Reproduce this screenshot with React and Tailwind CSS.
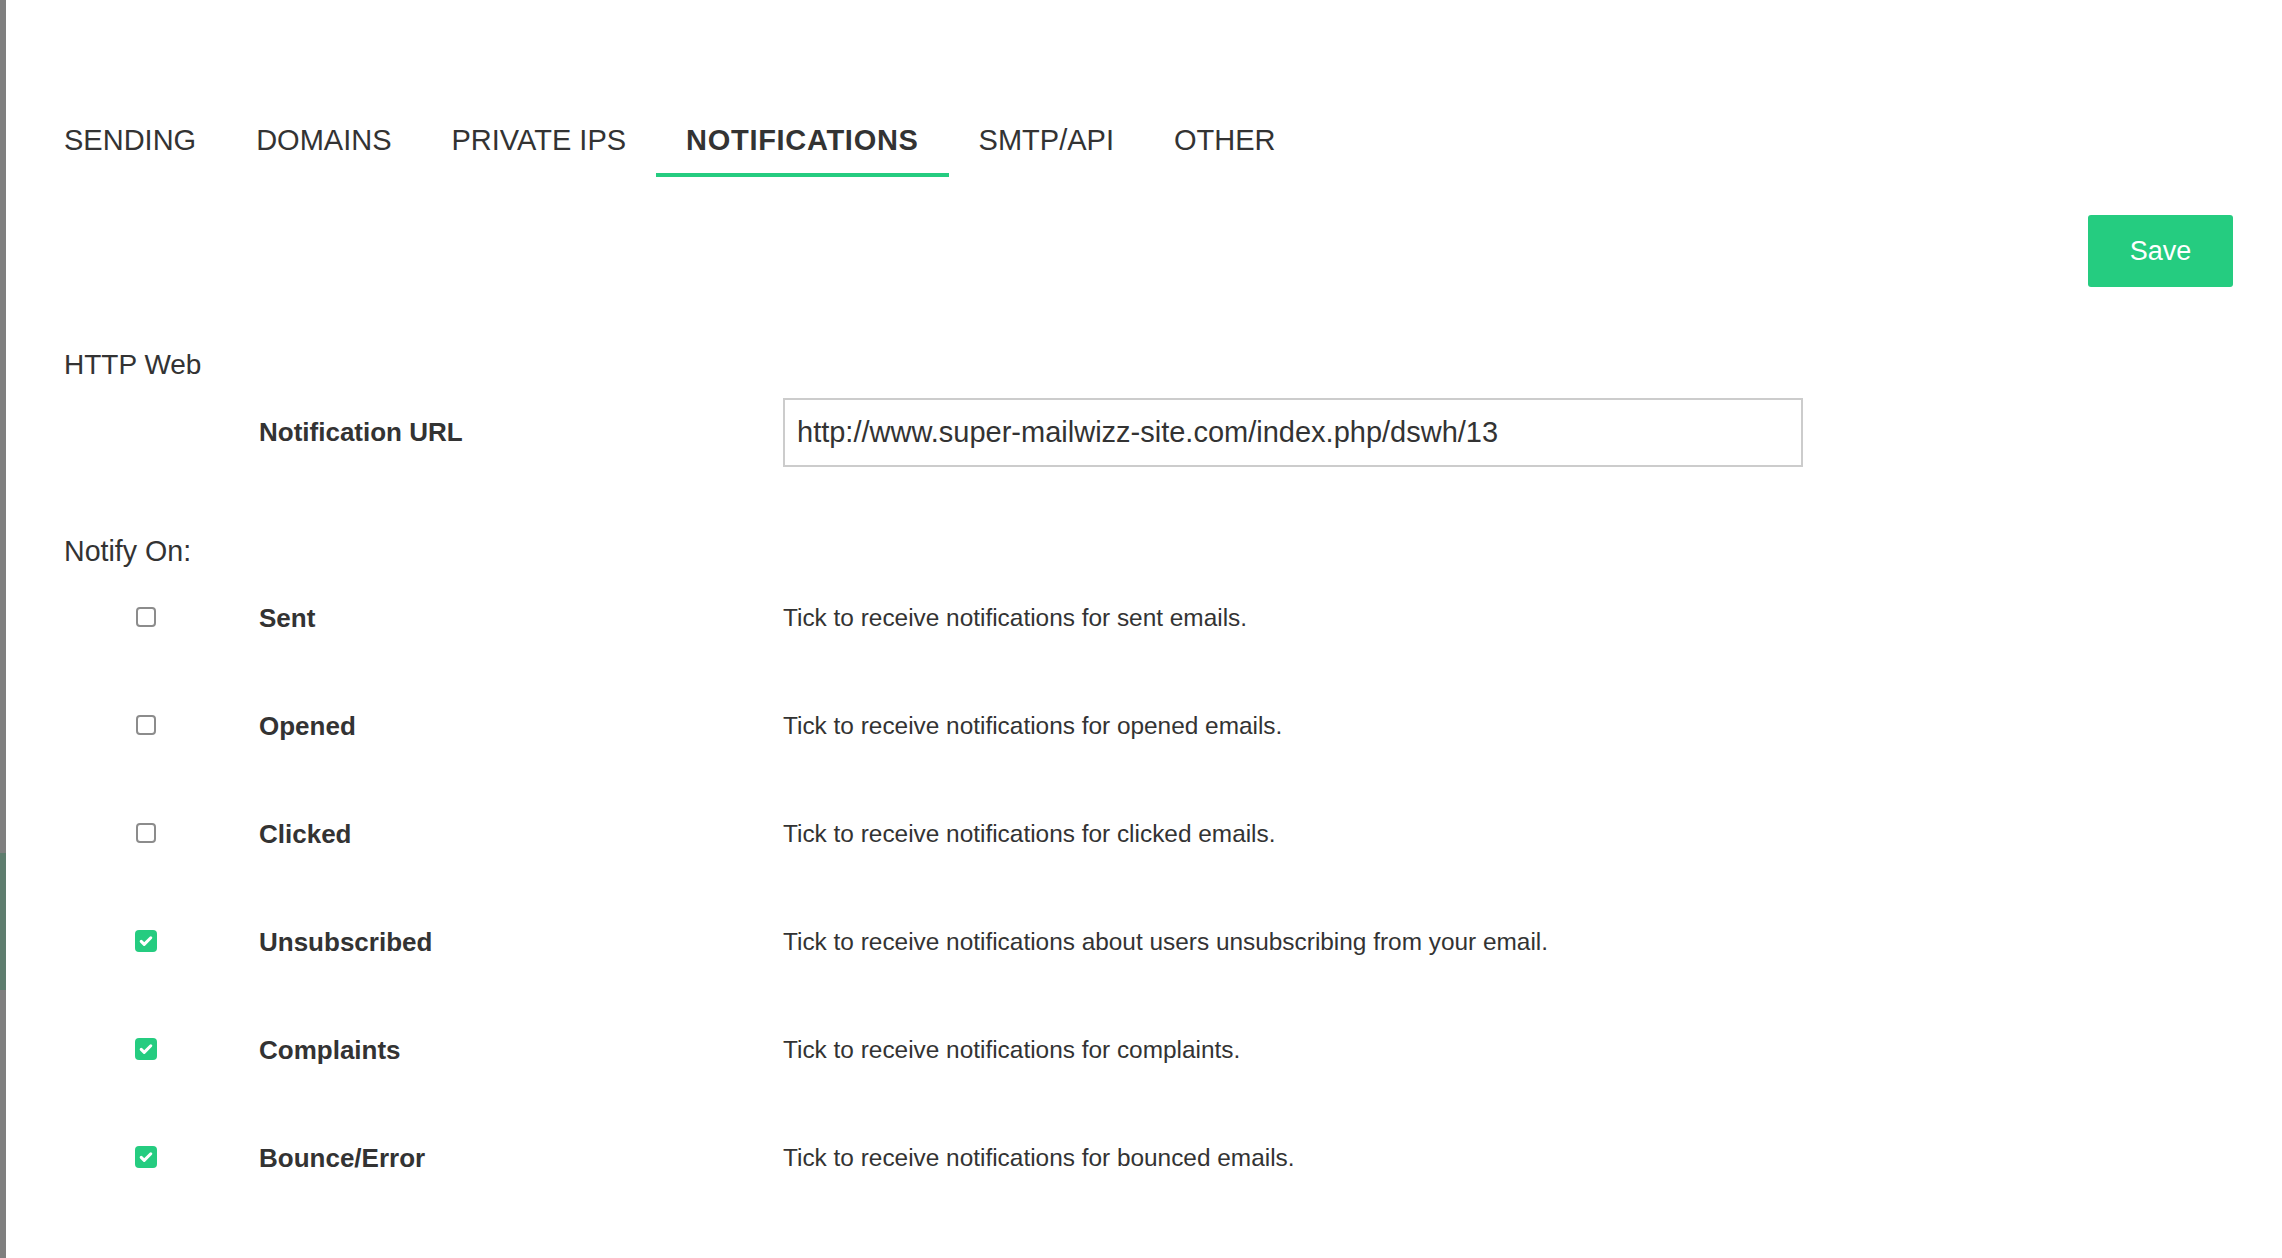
import React, { useState } from 'react';

const tabs = ['SENDING', 'DOMAINS', 'PRIVATE IPS', 'NOTIFICATIONS', 'SMTP/API', 'OTHER'];

const events = [
  { name: 'Sent', text: 'Tick to receive notifications for sent emails.', on: false },
  { name: 'Opened', text: 'Tick to receive notifications for opened emails.', on: false },
  { name: 'Clicked', text: 'Tick to receive notifications for clicked emails.', on: false },
  { name: 'Unsubscribed', text: 'Tick to receive notifications about users unsubscribing from your email.', on: true },
  { name: 'Complaints', text: 'Tick to receive notifications for complaints.', on: true },
  { name: 'Bounce/Error', text: 'Tick to receive notifications for bounced emails.', on: true },
];

const Check = ({ checked, onClick }) =>
  checked ? (
    <button onClick={onClick} className="w-[22px] h-[22px] rounded-[4px] bg-[#25cc80] flex items-center justify-center">
      <svg width="16" height="16" viewBox="0 0 16 16" fill="none">
        <path d="M3.2 8.4l3 3L12.8 4.8" stroke="white" strokeWidth="3" strokeLinecap="round" strokeLinejoin="round" />
      </svg>
    </button>
  ) : (
    <button onClick={onClick} className="w-[20px] h-[20px] rounded-[4px] border-2 border-[#8c8c8c] bg-white" />
  );

const App = () => {
  const [active, setActive] = useState(3);
  const [flags, setFlags] = useState(events.map((e) => e.on));

  const toggle = (i) => setFlags(flags.map((f, j) => (j === i ? !f : f)));

  return (
    <div className="min-h-screen flex bg-white text-[#333333] font-['Liberation_Sans',Arial,sans-serif]">
      {/* left edge strip */}
      <div className="w-[6px] shrink-0 bg-[#7f7f7f] flex flex-col">
        <div className="h-[853px]" />
        <div className="h-[137px] bg-[#5e7d6e]" />
      </div>

      <main className="flex-1 pl-[58px] pr-[49px]">
        {/* Tabs */}
        <nav className="flex -ml-[30px] pt-[123px]">
          {tabs.map((t, i) => (
            <button
              key={t}
              onClick={() => setActive(i)}
              className={`px-[30px] pb-[16px] text-[29px] leading-[34px] border-b-4 ${
                i === active ? 'font-bold tracking-[0.7px] border-[#25cc80]' : 'border-transparent'
              }`}
            >
              {t}
            </button>
          ))}
        </nav>

        <div className="flex justify-end mt-[38px]">
          <button className="w-[145px] h-[72px] rounded-[3px] bg-[#25cc80] text-white text-[27px]">
            Save
          </button>
        </div>

        {/* HTTP Web */}
        <h2 className="mt-[62px] text-[28px] leading-[32px]">HTTP Web</h2>
        <div className="flex items-center mt-[17px]">
          <div className="w-[195px] shrink-0" />
          <div className="w-[524px] shrink-0 text-[26px] font-bold">Notification URL</div>
          <input
            defaultValue="http://www.super-mailwizz-site.com/index.php/dswh/13"
            className="w-[1020px] h-[69px] border-2 border-[#cccccc] px-[12px] text-[29px] text-[#333333] outline-none"
          />
        </div>

        {/* Notify On */}
        <h2 className="mt-[70px] text-[28.6px] leading-[28px]">Notify On:</h2>
        <div className="-mt-[1px]">
          {events.map((e, i) => (
            <div key={e.name} className="flex items-center h-[108px]">
              <div className="w-[195px] shrink-0 pl-[71px] -mt-[3px]">
                <div className="w-[22px] flex justify-center">
                  <Check checked={flags[i]} onClick={() => toggle(i)} />
                </div>
              </div>
              <div className="w-[524px] shrink-0 text-[26px] font-bold">{e.name}</div>
              <div className="text-[24.4px]">{e.text}</div>
            </div>
          ))}
        </div>
      </main>
    </div>
  );
};

export default App;
